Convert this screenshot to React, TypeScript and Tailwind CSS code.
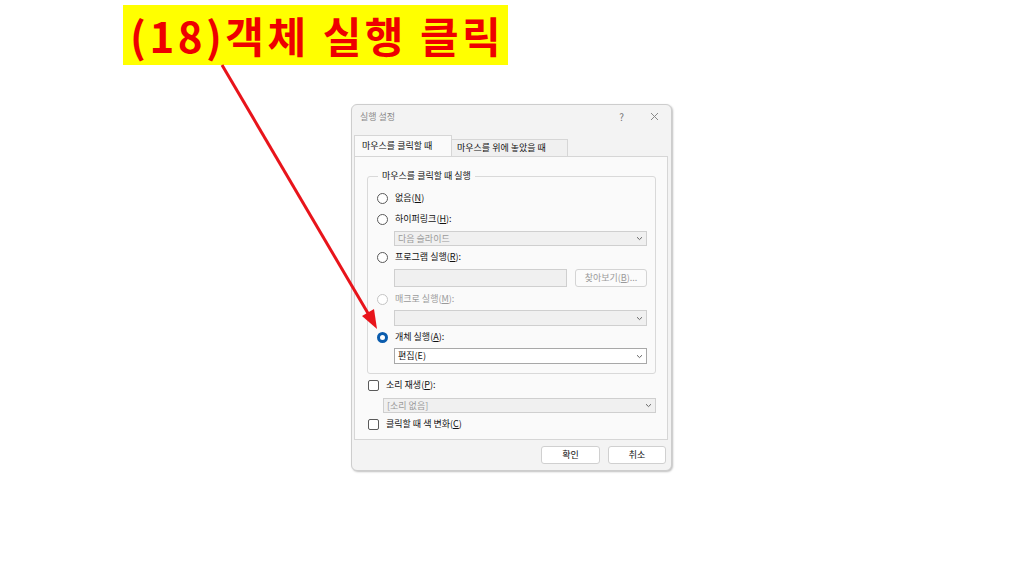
import React from 'react';

const font = { fontFamily: '"Noto Sans CJK KR", "Noto Sans", sans-serif' };

type RadioProps = { label: React.ReactNode; checked?: boolean; disabled?: boolean; className?: string };

const Radio = ({ label, checked, disabled, className = '' }: RadioProps) => (
  <div className={`flex items-center h-[16px] ${className}`}>
    <span
      className={`w-[11px] h-[11px] rounded-full bg-white ${
        checked ? 'border-[3px] border-[#0b5cad]' : disabled ? 'border border-[#c4c4c4]' : 'border border-[#5a5a5a]'
      }`}
    />
    <span className={`ml-[7px] ${disabled ? 'text-[#9a9a9a]' : 'text-[#111]'}`}>{label}</span>
  </div>
);

const Check = ({ label, className = '' }: { label: React.ReactNode; className?: string }) => (
  <div className={`flex items-center h-[16px] ${className}`}>
    <span className="w-[11px] h-[11px] rounded-[2px] border border-[#5a5a5a] bg-white" />
    <span className="ml-[7px] text-[#111]">{label}</span>
  </div>
);

const Chevron = () => (
  <svg width="7" height="5" viewBox="0 0 7 5" className="mr-[3px]">
    <path d="M1 1.2 L3.5 3.6 L6 1.2" fill="none" stroke="#666" strokeWidth="1" />
  </svg>
);

type SelectProps = { value?: string; enabled?: boolean; className?: string };

const Select = ({ value = '', enabled, className = '' }: SelectProps) => (
  <div
    className={`flex items-center justify-between border ${
      enabled ? 'bg-white border-[#a8a8a8] text-[#111]' : 'bg-[#f0f0f0] border-[#cfcfcf] text-[#9a9a9a]'
    } ${className}`}
  >
    <span className="pl-[3px]">{value}</span>
    <Chevron />
  </div>
);

const App = () => {
  return (
    <div className="relative w-[1024px] h-[576px] bg-white overflow-hidden" style={font}>
      {/* Caption banner */}
      <div className="ml-[123px] mt-[5px] w-[385px] h-[60px] bg-[#ffff00] flex items-center pl-[7px]">
        <span className="text-[42px] font-bold text-[#ee0000] leading-none tracking-[3.5px] whitespace-nowrap">(18)객체 실행 클릭</span>
      </div>

      {/* Dialog */}
      <div className="ml-[351px] mt-[39px] w-[321px] h-[367px] bg-[#f3f3f3] border border-[#cdcdcd] rounded-[6px] shadow-[1px_1px_2px_rgba(0,0,0,0.25)] text-[9px] flex flex-col">
        <div className="h-[23px] flex items-center pl-[8px] pr-[12px] text-[#8a8a8a]">
          <span className="flex-1">실행 설정</span>
          <span className="text-[10px] text-[#777] mr-[26px]">?</span>
          <svg width="9" height="9" viewBox="0 0 9 9">
            <path d="M1 1 L8 8 M8 1 L1 8" stroke="#8a8a8a" strokeWidth="1" />
          </svg>
        </div>

        {/* Tabs */}
        <div className="mt-[8px] ml-[2px] flex items-end h-[20px]">
          <div className="h-[21px] w-[98px] bg-[#fafafa] border border-b-0 border-[#d6d6d6] flex items-center pl-[7px] text-[#111] relative z-10">
            마우스를 클릭할 때
          </div>
          <div className="h-[17px] w-[116px] bg-[#f0f0f0] border border-l-0 border-b-0 border-[#d6d6d6] flex items-center pl-[5px] text-[#111]">
            마우스를 위에 놓았을 때
          </div>
        </div>

        {/* Tab panel */}
        <div className="ml-[2px] w-[314px] h-[284px] bg-[#fafafa] border border-[#d6d6d6] flex flex-col">
          <fieldset className="ml-[12px] mr-[11px] mt-[13px] h-[204px] border border-[#d9d9d9] rounded-[3px] pl-[9px] pr-[8px] pt-[8px]">
            <legend className="ml-[1px] px-[4px] leading-[12px] text-[#111]">마우스를 클릭할 때 실행</legend>
            <Radio label={<>없음(<u>N</u>)</>} />
            <Radio className="mt-[5px]" label={<>하이퍼링크(<u>H</u>):</>} />
            <Select className="mt-[4px] ml-[17px] h-[15px]" value="다음 슬라이드" />
            <Radio className="mt-[3px]" label={<>프로그램 실행(<u>R</u>):</>} />
            <div className="mt-[4px] ml-[17px] flex h-[18px]">
              <div className="w-[173px] bg-[#f0f0f0] border border-[#cfcfcf]" />
              <div className="ml-[8px] w-[72px] bg-[#fbfbfb] border border-[#d4d4d4] rounded-[3px] flex items-center justify-center text-[#9a9a9a]">
                찾아보기(<u>B</u>)...
              </div>
            </div>
            <Radio className="mt-[4px]" disabled label={<>매크로 실행(<u>M</u>):</>} />
            <Select className="mt-[3px] ml-[17px] h-[16px]" />
            <Radio className="mt-[3px]" checked label={<>개체 실행(<u>A</u>):</>} />
            <Select className="mt-[3px] ml-[17px] h-[16px]" value="편집(E)" enabled />
          </fieldset>
          <div className="ml-[13px] mr-[11px]">
            <Check className="mt-[3px]" label={<>소리 재생(<u>P</u>):</>} />
            <Select className="mt-[5px] ml-[15px] h-[15px]" value="[소리 없음]" />
            <Check className="mt-[3px]" label={<>클릭할 때 색 변화(<u>C</u>)</>} />
          </div>
        </div>

        {/* Buttons */}
        <div className="mt-[6px] mr-[5px] flex justify-end gap-[8px]">
          <div className="w-[59px] h-[18px] bg-white border border-[#d0d0d0] rounded-[3px] flex items-center justify-center text-[#111]">
            확인
          </div>
          <div className="w-[58px] h-[18px] bg-white border border-[#d0d0d0] rounded-[3px] flex items-center justify-center text-[#111]">
            취소
          </div>
        </div>
      </div>

      {/* Red pointer arrow */}
      <svg className="absolute left-0 top-0 pointer-events-none" width="1024" height="576">
        <line x1="222" y1="65" x2="369" y2="315" stroke="#e8141b" strokeWidth="3" />
        <polygon points="377,329 374,309 362,316" fill="#e8141b" />
      </svg>
    </div>
  );
};

export default App;
